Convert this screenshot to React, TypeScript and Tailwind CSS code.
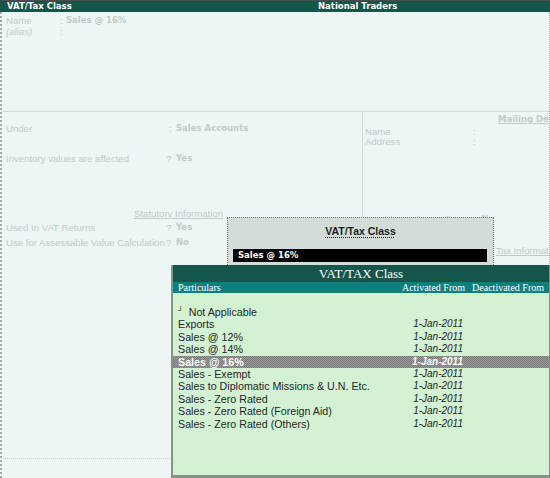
import React from "react";

const fade = "text-[#c3caca]";
const sans = "font-['Liberation_Sans',Arial,sans-serif]";
const dv = "font-['DejaVu_Sans',Verdana,sans-serif] font-bold";
const serif = "font-['Liberation_Serif','Times_New_Roman',serif]";

const rows = [
  "Exports",
  "Sales @ 12%",
  "Sales @ 14%",
  "Sales @ 16%",
  "Sales - Exempt",
  "Sales to Diplomatic Missions & U.N. Etc.",
  "Sales - Zero Rated",
  "Sales - Zero Rated (Foreign Aid)",
  "Sales - Zero Rated (Others)",
];

export default function App() {
  return (
    <div className={`relative w-[550px] h-[478px] overflow-hidden bg-[#eef5f5] ${sans}`}>
      {/* Header */}
      <div className="h-[12px] border-t border-[#4d4d4d] bg-[#15554a] flex items-center text-white">
        <div className={`w-[318px] pl-[7px] text-[8.5px] leading-[11px] ${dv}`}>VAT/Tax Class</div>
        <div className={`text-[8.5px] leading-[11px] ${dv}`}>National Traders</div>
      </div>

      <div className="h-[466px] flex flex-col border-l-2 border-r border-dotted border-[#a4a9a9]">
        {/* Top section */}
        <div className="h-[99px] pt-[2.5px] pl-[4px]">
          <div className={`flex text-[9.6px] leading-[11px] ${fade}`}>
            <span className="w-[54px]">Name</span>
            <span className="w-[6px]">:</span>
            <span className={`text-[8.5px] ${dv}`}>Sales @ 16%</span>
          </div>
          <div className={`flex text-[9.6px] leading-[11px] italic ${fade}`}>
            <span className="w-[54px]">(alias)</span>
            <span className="w-[6px] not-italic">:</span>
          </div>
        </div>
        <div className="ml-[1px] h-px bg-[#d3d9d9]" />

        {/* Bottom section */}
        <div className="flex-1 flex">
          <div className="w-[360px] shrink-0 flex flex-col pl-[4px]">
            <div className={`mt-[10.5px] flex text-[9.6px] leading-[11px] ${fade}`}>
              <span className="w-[163px]">Under</span>
              <span className="w-[7px]">:</span>
              <span className={`text-[8.5px] ${dv}`}>Sales Accounts</span>
            </div>
            <div className={`mt-[19px] flex text-[9.6px] leading-[11px] ${fade}`}>
              <span className="w-[160px]">Inventory values are affected</span>
              <span className="w-[10px]">?</span>
              <span className={`text-[8.5px] ${dv}`}>Yes</span>
            </div>
            <div className={`mt-[44px] ml-[128px] text-[9.6px] leading-[11px] underline underline-offset-1 ${fade}`}>
              Statutory Information
            </div>
            <div className={`mt-[3px] flex text-[9.6px] leading-[11px] ${fade}`}>
              <span className="w-[160px]">Used In VAT Returns</span>
              <span className="w-[10px]">?</span>
              <span className={`text-[8.5px] ${dv}`}>Yes</span>
            </div>
            <div className={`mt-[4px] flex text-[9.6px] leading-[11px] ${fade}`}>
              <span className="w-[160px] whitespace-nowrap">Use for Assessable Value Calculation</span>
              <span className="w-[10px]">?</span>
              <span className={`text-[8.5px] ${dv}`}>No</span>
            </div>
            <div className="mt-auto mb-[19px] -ml-[3px] border-t border-dotted border-[#c8cece]" />
          </div>

          <div className="flex-1 min-w-0 overflow-hidden border-l border-[#d3d9d9] pl-[2px] flex flex-col whitespace-nowrap">
            <div className={`mt-[1.5px] ml-[133px] text-[8.5px] leading-[11px] underline ${dv} ${fade}`}>
              Mailing Details
            </div>
            <div className={`mt-[2px] flex text-[9.6px] leading-[10px] ${fade}`}>
              <span className="w-[108px]">Name</span>
              <span>:</span>
            </div>
            <div className={`flex text-[9.6px] leading-[10px] ${fade}`}>
              <span className="w-[108px]">Address</span>
              <span>:</span>
            </div>
            <div className={`mt-[67px] flex text-[9.6px] leading-[11px] ${fade}`}>
              <span className="w-[108px]">Provide Bank Details</span>
              <span className="w-[8px]">?</span>
              <span className={`text-[8.5px] ${dv}`}>No</span>
            </div>
            <div className={`mt-[20px] ml-[131px] text-[9.6px] leading-[11px] underline ${fade}`}>
              Tax Information
            </div>
          </div>
        </div>
      </div>

      {/* Grey popup */}
      <div className="absolute left-[227px] top-[217px] w-[267px] h-[60px] bg-[#d4dcda] border border-dotted border-[#7a7a7a]">
        <div className={`pt-[7px] text-center text-[10.5px] leading-[12px] ${sans}`}>
          <span className="font-bold text-[#1e1e1e] underline decoration-dotted underline-offset-2">
            VAT/Tax Class
          </span>
        </div>
        <div className="mt-[12px] ml-[5px] w-[254px] h-[13px] bg-black flex items-center pl-[5px]">
          <span className={`text-[8.5px] leading-[11px] text-white ${dv}`}>Sales @ 16%</span>
        </div>
      </div>

      {/* Green popup */}
      <div className="absolute left-[171px] top-[265px] right-0 bottom-0 flex flex-col bg-[#d3f1d3] border-l-2 border-r border-b-[3px] border-[#87928a]">
        <div className={`h-[17px] bg-[#15554a] text-white text-center text-[13px] leading-[17px] ${serif}`}>
          VAT/TAX Class
        </div>
        <div className={`h-[11px] bg-[#0d7f7c] text-white flex items-center text-[10px] leading-[11px] pl-[5px] pr-[5px] ${serif}`}>
          <span className="flex-1">Particulars</span>
          <span className="w-[72px] text-right">Activated From</span>
          <span className="w-[79px] text-right">Deactivated From</span>
        </div>
        <div className="pt-[13px] text-[10.7px] text-[#262626]">
          <div className="h-[12.4px] leading-[12.4px] flex pl-[5px]">
            <span className="text-[8px] leading-[8px] mr-[5px] mt-[1px]">┘</span>
            <span>Not Applicable</span>
          </div>
          {rows.map((r) => {
            const sel = r === "Sales @ 16%";
            return (
              <div
                key={r}
                className={
                  sel
                    ? "h-[12.4px] leading-[12.4px] flex pl-[5px] pr-[5px] text-white font-bold bg-[repeating-conic-gradient(#7c7c7c_0_25%,#989898_0_50%)] bg-[length:2px_2px]"
                    : "h-[12.4px] leading-[12.4px] flex pl-[5px] pr-[5px]"
                }
              >
                <span className="flex-1 whitespace-nowrap">{r}</span>
                <span className="w-[72px] text-right italic text-[10px]">1-Jan-2011</span>
                <span className="w-[81px]" />
              </div>
            );
          })}
        </div>
      </div>
    </div>
  );
}
